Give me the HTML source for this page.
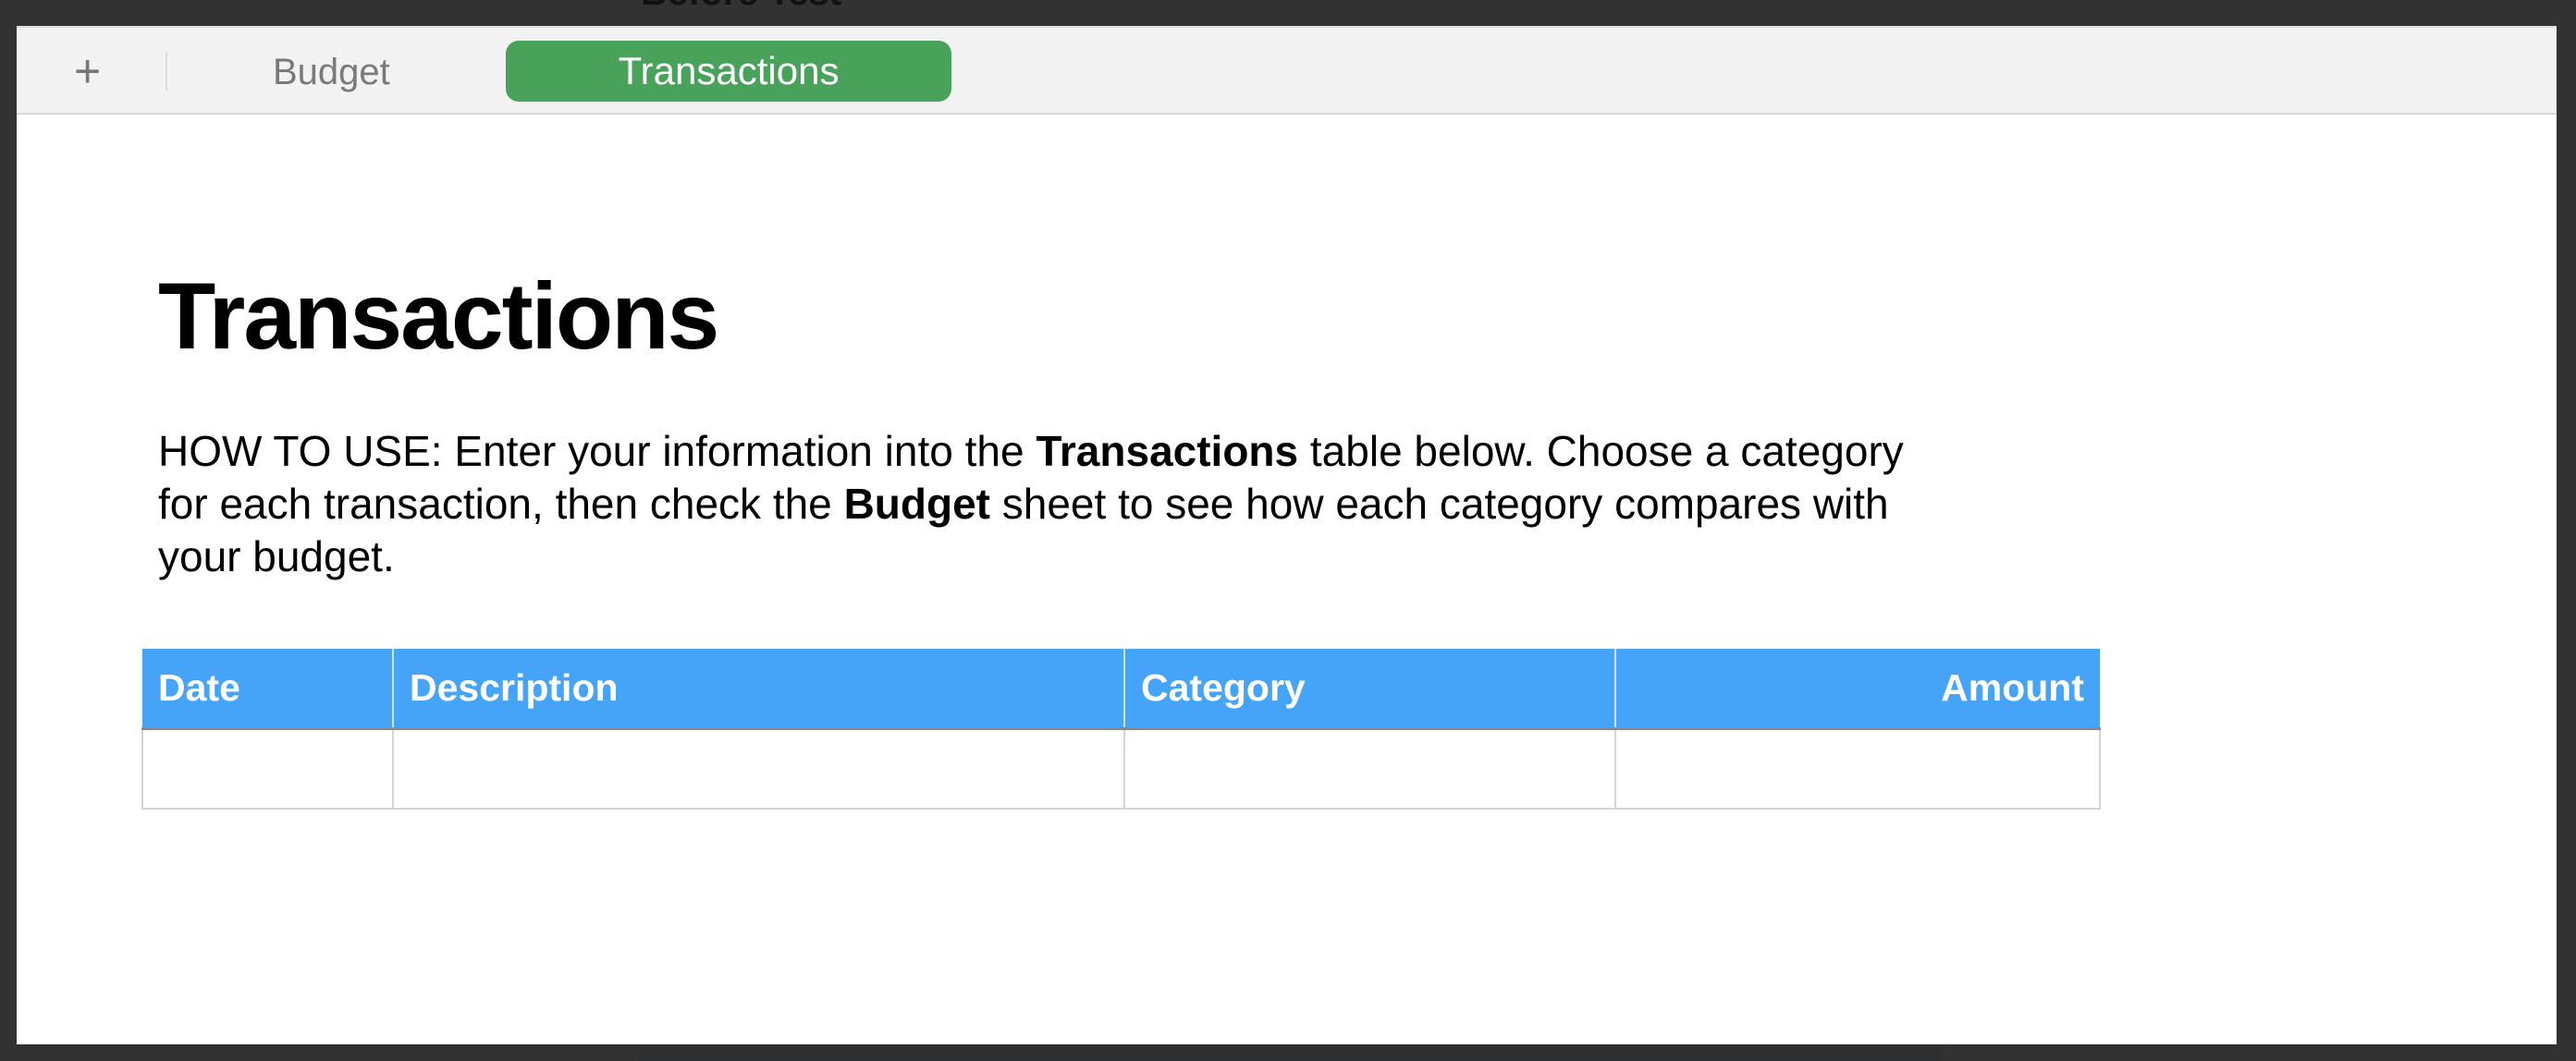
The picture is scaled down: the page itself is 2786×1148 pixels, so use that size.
<!DOCTYPE html>
<html><head><meta charset="utf-8"><style>
body{margin:0;width:2786px;height:1148px;background:#323232;position:relative;overflow:hidden;font-family:"Liberation Sans",Arial,sans-serif}
.top{position:absolute;left:693px;top:-30px;font-size:40px;font-weight:bold;color:#111}
.win{position:absolute;left:18px;top:28px;width:2747px;height:1102px;background:#fff}
.bar{position:absolute;left:0;top:0;right:0;height:92px;background:#f2f2f2;border-top:2px solid #dcdcdc;border-bottom:2px solid #d6d6d6}
.plus{position:absolute;left:62px;top:18px;font-size:50px;color:#777;font-weight:300}
.sep{position:absolute;left:161px;top:26px;width:2px;height:42px;background:#ddd}
.budget{position:absolute;left:277px;top:26px;font-size:40px;color:#7a7a7a}
.pill{position:absolute;left:529px;top:14px;width:482px;height:66px;background:#48a25a;border-radius:14px;color:#fff;font-size:42px;text-align:center;line-height:66px}
h1{position:absolute;left:153px;top:256px;margin:0;font-size:102px;font-weight:bold;color:#000;letter-spacing:-2px}
p{position:absolute;left:153px;top:432px;margin:0;width:1920px;font-size:46px;line-height:57px;color:#000}
table{position:absolute;left:135px;top:674px;border-collapse:collapse;width:2119px}
th{background:#45a3f8;color:#fff;font-size:41px;text-align:left;height:85px;padding:0 17px;border-left:2px solid #cfe3f8;border-bottom:3px solid #8a8a8a}
th:first-child{border-left:none}
td{height:82px;border:2px solid #d4d4d4}
.bot{position:absolute;left:690px;top:1130px;width:1410px;height:18px;background:#2e2f31}
</style></head><body>
<div class="top">Before Test</div>
<div class="win">
<div class="bar"><div class="plus">+</div><div class="sep"></div><div class="budget">Budget</div><div class="pill">Transactions</div></div>
<h1>Transactions</h1>
<p>HOW TO USE: Enter your information into the <b>Transactions</b> table below. Choose a category for each transaction, then check the <b>Budget</b> sheet to see how each category compares with your budget.</p>
<table><tr><th style="width:236px">Date</th><th style="width:755px">Description</th><th style="width:495px">Category</th><th style="text-align:right">Amount</th></tr>
<tr><td></td><td></td><td></td><td></td></tr></table>
</div>
<div class="bot"></div>
</body></html>
